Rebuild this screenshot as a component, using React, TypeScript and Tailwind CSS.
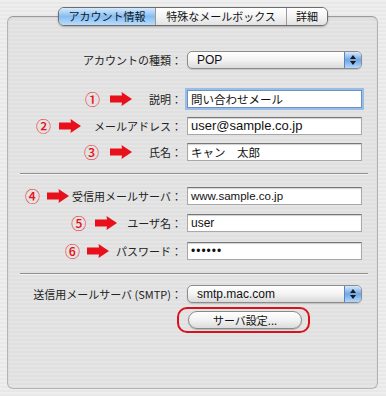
import React from "react";

const JP = "font-['Noto_Sans_CJK_JP','Noto_Sans',sans-serif]";
const LAT = "font-['Liberation_Sans','Noto_Sans_CJK_JP',sans-serif]";

function Arrow() {
  return (
    <svg width="22" height="14" viewBox="0 0 22 14" className="shrink-0">
      <polygon points="0,3.5 12,3.5 11.5,0 22,7 11.5,14 12,10.5 0,10.5" fill="#e8101a" />
    </svg>
  );
}

function Num({ n }: { n: string }) {
  return (
    <span className={`${JP} text-[15px] leading-[16px] font-medium text-[#e8101a] shrink-0`}>{n}</span>
  );
}

function Label({
  text,
  num,
  g1,
  g2,
}: {
  text: string;
  num?: string;
  g1?: string;
  g2?: string;
}) {
  return (
    <div className="flex items-center justify-end">
      {num && <Num n={num} />}
      {num && (
        <span className={g1}>
          <Arrow />
        </span>
      )}
      <span className={`${JP} ${num ? g2 : ""} text-[11px] leading-[16px] text-[#222] whitespace-nowrap`}>
        {text}
      </span>
    </div>
  );
}

function Field({
  value,
  focused,
  cls,
}: {
  value: string;
  focused?: boolean;
  cls: string;
}) {
  return (
    <div
      className={`h-[18px] w-[175px] bg-white flex items-center pl-[3px] border ${
        focused
          ? "border-[#6f8fbd] ring-2 ring-[#98bdea]"
          : "border-[#a8a8a8] border-t-[#777777] shadow-[inset_0_1px_1px_rgba(0,0,0,0.18)]"
      }`}
    >
      <span className={`${cls} text-[#111] whitespace-nowrap leading-[16px]`}>{value}</span>
    </div>
  );
}

function Popup({ value }: { value: string }) {
  return (
    <div className="flex h-[18px] w-[175px] rounded-[5px] border border-[#8c8c8c] overflow-hidden bg-gradient-to-b from-white via-[#f3f3f3] to-[#dadada] shadow-[0_1px_1px_rgba(0,0,0,0.15)]">
      <span className={`${LAT} flex-1 pl-[9px] text-[12px] leading-[16px] text-[#111]`}>{value}</span>
      <span className="w-[17px] border-l border-[#5d83b8] bg-gradient-to-b from-[#d6e9fc] via-[#6ea6e6] to-[#b4d8fb] flex flex-col items-center justify-center gap-[2px]">
        <svg width="6" height="4" viewBox="0 0 6 4">
          <polygon points="3,0 6,4 0,4" fill="#1a1a1a" />
        </svg>
        <svg width="6" height="4" viewBox="0 0 6 4">
          <polygon points="0,0 6,0 3,4" fill="#1a1a1a" />
        </svg>
      </span>
    </div>
  );
}

function Row({ children, mt }: { children: React.ReactNode; mt: string }) {
  return <div className={`grid grid-cols-[174px_175px] gap-x-[5px] items-center ${mt}`}>{children}</div>;
}

function Sep({ mt }: { mt: string }) {
  return <div className={`${mt} ml-[12px] w-[348px] h-[1px] bg-[#8f8f8f] shadow-[0_1px_0_rgba(255,255,255,0.6)]`} />;
}

export default function App() {
  return (
    <div className="w-[386px] h-[396px] overflow-hidden bg-[image:repeating-linear-gradient(180deg,#eeeeee_0px,#eeeeee_2px,#e8e8e8_2px,#e8e8e8_4px)] pt-[7px] px-[7px]">
      {/* Tabs */}
      <div className="relative z-10 flex justify-center">
        <div className="flex h-[19px] w-[270px] rounded-[6px] border border-[#6c6c6c] overflow-hidden shadow-[0_1px_2px_rgba(0,0,0,0.25)]">
          <div
            className={`${JP} w-[96px] flex items-center justify-center text-[11px] text-[#0d1a2a] bg-gradient-to-b from-[#d5eafd] via-[#86bdf1] to-[#b9dcfc]`}
          >
            アカウント情報
          </div>
          <div
            className={`${JP} w-[131px] flex items-center justify-center text-[11px] text-[#111] border-l border-[#9a9a9a] bg-gradient-to-b from-white via-[#f4f4f4] to-[#e2e2e2]`}
          >
            特殊なメールボックス
          </div>
          <div
            className={`${JP} w-[41px] flex items-center justify-center text-[11px] text-[#111] border-l border-[#9a9a9a] bg-gradient-to-b from-white via-[#f4f4f4] to-[#e2e2e2]`}
          >
            詳細
          </div>
        </div>
      </div>

      {/* Panel */}
      <div className="-mt-[10px] h-[373px] w-[371px] rounded-[6px] border border-[#b4b4b4] border-t-[#9a9a9a] bg-[image:repeating-linear-gradient(180deg,#e5e5e5_0px,#e5e5e5_2px,#e0e0e0_2px,#e0e0e0_4px)] pt-[34px] shadow-[inset_0_1px_2px_rgba(0,0,0,0.08)]">
        <Row mt="">
          <Label text="アカウントの種類：" />
          <Popup value="POP" />
        </Row>

        <Row mt="mt-[21px]">
          <Label text="説明：" num="①" g1="ml-[10px]" g2="ml-[17px]" />
          <Field value="問い合わせメール" focused cls={`${JP} text-[11.5px]`} />
        </Row>
        <Row mt="mt-[9px]">
          <Label text="メールアドレス：" num="②" g1="ml-[8px]" g2="ml-[13px]" />
          <Field value="user@sample.co.jp" cls={`${LAT} text-[13px]`} />
        </Row>
        <Row mt="mt-[8px]">
          <Label text="氏名：" num="③" g1="ml-[11px]" g2="ml-[17px]" />
          <Field value="キャン　太郎" cls={`${JP} text-[11.5px]`} />
        </Row>

        <Sep mt="mt-[12px]" />

        <Row mt="mt-[13px]">
          <Label text="受信用メールサーバ：" num="④" g1="ml-[7px]" g2="ml-[3px]" />
          <Field value="www.sample.co.jp" cls={`${LAT} text-[11.5px]`} />
        </Row>
        <Row mt="mt-[9px]">
          <Label text="ユーザ名：" num="⑤" g1="ml-[9px]" g2="ml-[10px]" />
          <Field value="user" cls={`${LAT} text-[12px]`} />
        </Row>
        <Row mt="mt-[10px]">
          <Label text="パスワード：" num="⑥" g1="ml-[7px]" g2="ml-[7px]" />
          <Field value="••••••" cls={`${LAT} text-[12px] tracking-[1px]`} />
        </Row>

        <Sep mt="mt-[13px]" />

        <Row mt="mt-[11px]">
          <Label text="送信用メールサーバ (SMTP)：" />
          <Popup value="smtp.mac.com" />
        </Row>

        <Row mt="mt-[4px]">
          <div />
          <div className="-ml-[10px] w-[133px] h-[26px] rounded-[10px] border-2 border-[#d8121c] flex items-center pl-[9px]">
            <div
              className={`${JP} w-[114px] h-[18px] rounded-full border border-[#8a8a8a] bg-gradient-to-b from-white via-[#f2f2f2] to-[#dcdcdc] flex items-center justify-center text-[11px] text-[#111] shadow-[0_1px_1px_rgba(0,0,0,0.2)]`}
            >
              サーバ設定...
            </div>
          </div>
        </Row>
      </div>
    </div>
  );
}
